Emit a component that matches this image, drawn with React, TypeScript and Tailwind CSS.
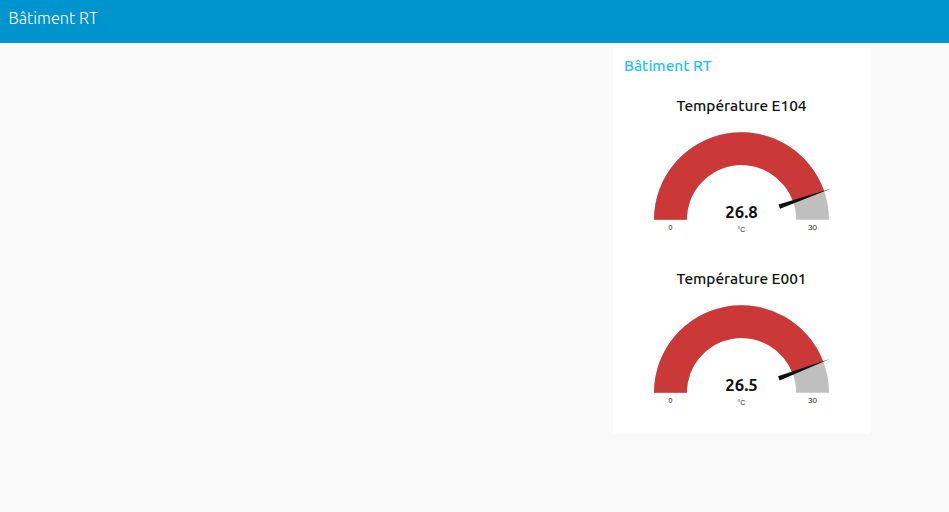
type GaugeProps = { title: string; value: number };

const CX = 87.5;
const CY = 87.8;

function point(radius: number, angle: number) {
  return `${(CX - radius * Math.cos(angle)).toFixed(2)} ${(CY - radius * Math.sin(angle)).toFixed(2)}`;
}

function Gauge({ title, value }: GaugeProps) {
  const a = (Math.PI * value) / 30;
  const filled = `M0 87.8A87.5 87.5 0 0 1 ${point(87.5, a)}L${point(54.7, a)}A54.7 54.7 0 0 0 32.8 87.8Z`;
  const deg = (a * 180) / Math.PI - 180;
  return (
    <section className="flex h-[173px] flex-col items-center">
      <h2 className="h-[36px] whitespace-nowrap text-[15.4px] font-medium leading-[20px] text-[#111]">{title}</h2>
      <svg width="175" height="110" viewBox="0 0 175 110" className="overflow-visible">
        <path d="M0 87.8A87.5 87.5 0 0 1 175 87.8H142.2A54.7 54.7 0 0 0 32.8 87.8Z" fill="#bfbfbf" />
        <path d={filled} fill="#ca3838" />
        <g transform={`rotate(${deg} ${CX} ${CY})`}>
          <path d="M127.5 85.5L182 87.8L127.5 90.1Z" fill="#111" />
        </g>
        <text x="87.5" y="85.5" textAnchor="middle" textLength="32.5" lengthAdjust="spacingAndGlyphs" fontFamily="Ubuntu, Noto Sans, sans-serif" fontSize="16" fontWeight="700" fill="#111">{value}</text>
        <g fontFamily="Liberation Sans, Arial, sans-serif" fontSize="7" textAnchor="middle" fill="#222">
          <text x="87.5" y="99.5">°C</text>
          <text x="16.4" y="97.5">0</text>
          <text x="158.6" y="97.5" textLength="9" lengthAdjust="spacingAndGlyphs">30</text>
        </g>
      </svg>
    </section>
  );
}

export default function App() {
  return (
    <div className="min-h-[512px] bg-[#fafafa] font-['Ubuntu','Noto_Sans',sans-serif]">
      <header className="h-[43px] bg-[#0094ce] pl-[8.5px] pt-[6px] text-[16.24px] font-light leading-[24px] text-white">Bâtiment RT</header>
      <main className="ml-[613px] mt-[5px] h-[386px] w-[257px] bg-white pt-[8px]">
        <h1 className="h-[40px] pl-[11px] text-[15.4px] font-medium leading-[20px] text-[#1fbfff]">Bâtiment RT</h1>
        <Gauge title="Température E104" value={26.8} />
        <Gauge title="Température E001" value={26.5} />
      </main>
    </div>
  );
}
